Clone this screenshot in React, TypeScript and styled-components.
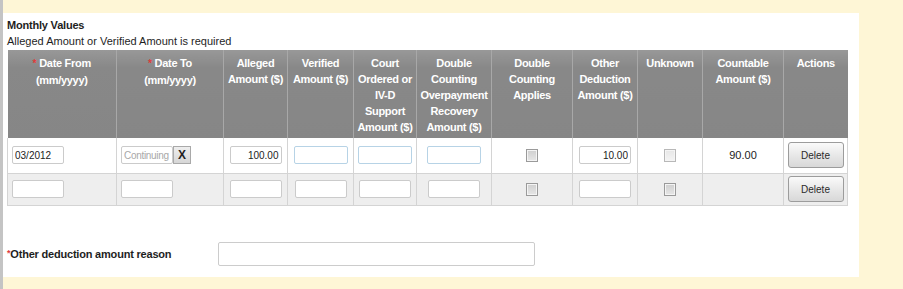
import styled, { createGlobalStyle } from "styled-components";

const GlobalStyle = createGlobalStyle`
    html, body {
        margin: 0;
        padding: 0;
        background: #fef6d6;
        font-family: "Liberation Sans", Arial, sans-serif;
    }
`;

const Page = styled.div`
    min-height: 100vh;
    box-sizing: border-box;
    border-left: 3px solid #c4c4c4;
    padding-top: 13px;
`;

const Panel = styled.section`
    width: 856px;
    height: 264px;
    box-sizing: border-box;
    background: #ffffff;
    padding: 4px 0 0 4px;
`;

const Title = styled.h2`
    margin: 0;
    font-size: 11px;
    line-height: 16px;
    font-weight: bold;
    color: #1e1e1e;
    letter-spacing: -0.2px;
`;

const Hint = styled.p`
    margin: 0 0 1px;
    font-size: 11px;
    line-height: 16px;
    color: #1e1e1e;
`;

const Table = styled.table`
    width: 840px;
    table-layout: fixed;
    border-collapse: collapse;
    border-bottom: 1px solid #d2d2d2;
`;

const HeadCell = styled.th`
    height: 88px;
    box-sizing: border-box;
    padding: 5px 1px 0;
    vertical-align: top;
    text-align: center;
    background: linear-gradient(#989898, #888888 20%, #868686);
    border-left: 1px solid #a8a8a8;
    color: #ffffff;
    font-size: 11px;
    line-height: 16px;
    font-weight: bold;
    letter-spacing: -0.3px;
    white-space: nowrap;
    &:first-child {
        border-left: none;
    }
`;

const Star = styled.span`
    color: #e03a3a;
    font-size: 10px;
    margin-right: 3px;
`;

const Row = styled.tr<{ $shade: boolean }>`
    height: ${(props) => (props.$shade ? "32px" : "35px")};
    background: ${(props) => (props.$shade ? "#eeeeee" : "#ffffff")};
`;

const Cell = styled.td<{ $left?: boolean }>`
    padding: 0 ${(props) => (props.$left ? "4px" : "0")};
    border: 1px solid #d4d4d4;
    border-top: none;
    text-align: ${(props) => (props.$left ? "left" : "center")};
    vertical-align: middle;
    font-size: 11px;
    color: #222222;
`;

const Field = styled.input<{ $blue?: boolean; $right?: boolean }>`
    width: ${(props) => (props.$blue ? "54px" : "52px")};
    height: 18px;
    box-sizing: border-box;
    margin: 0;
    padding: 0 2px;
    border: 1px solid ${(props) => (props.$blue ? "#b7d3e6" : "#cbcbcb")};
    border-radius: 2px;
    background: #ffffff;
    font-family: "Liberation Sans", Arial, sans-serif;
    font-size: 10px;
    color: #222222;
    text-align: ${(props) => (props.$right ? "right" : "left")};
    vertical-align: middle;
    outline: none;
    &::placeholder {
        color: #a8a8a8;
        letter-spacing: -0.3px;
    }
`;

const DateGroup = styled.span`
    display: inline-flex;
    vertical-align: middle;
`;

const ClearButton = styled.button`
    width: 18px;
    height: 18px;
    margin: 0;
    padding: 0;
    border: 1px solid #a9a9a9;
    background: linear-gradient(#eeeeee, #d6d6d6);
    font-family: "Liberation Sans", Arial, sans-serif;
    font-size: 12px;
    font-weight: bold;
    color: #222222;
`;

const Check = styled.span<{ $dark?: boolean }>`
    display: inline-block;
    width: 10px;
    height: 11px;
    vertical-align: middle;
    border: 1px solid ${(props) => (props.$dark ? "#9a9a9a" : "#b8b8b8")};
    background: ${(props) =>
        props.$dark
            ? "linear-gradient(#cfcfcf, #e6e6e6)"
            : "linear-gradient(#e6e6e6, #f4f4f4)"};
    box-shadow: inset 0 0 0 1px #f4f4f4;
`;

const DeleteButton = styled.button`
    width: 56px;
    height: 26px;
    margin: 0;
    padding: 0;
    border: 1px solid #9c9c9c;
    border-radius: 3px;
    background: linear-gradient(#fafafa, #e8e8e8 50%, #d8d8d8);
    font-family: "Liberation Sans", Arial, sans-serif;
    font-size: 10px;
    color: #2a2a2a;
    vertical-align: middle;
`;

const ReasonRow = styled.div`
    display: flex;
    align-items: center;
    margin-top: 36px;
`;

const ReasonLabel = styled.label`
    width: 211px;
    font-size: 11px;
    font-weight: bold;
    color: #1e1e1e;
    letter-spacing: -0.2px;
`;

const ReasonStar = styled.span`
    color: #e03a3a;
    font-size: 9px;
    vertical-align: 2px;
`;

const ReasonInput = styled.input`
    width: 317px;
    height: 24px;
    box-sizing: border-box;
    margin: 0;
    border: 1px solid #cccccc;
    border-radius: 2px;
    background: #ffffff;
    outline: none;
`;

interface IColumn {
    width: number;
    lines: string[];
    required?: boolean;
}

interface IRow {
    dateFrom: string;
    continuing: boolean;
    alleged: string;
    other: string;
    countable: string;
}

const columns: IColumn[] = [
    { width: 109, lines: ["Date From", "(mm/yyyy)"], required: true },
    { width: 107, lines: ["Date To", "(mm/yyyy)"], required: true },
    { width: 64, lines: ["Alleged", "Amount ($)"] },
    { width: 66, lines: ["Verified", "Amount ($)"] },
    { width: 63, lines: ["Court", "Ordered or", "IV-D", "Support", "Amount ($)"] },
    { width: 75, lines: ["Double", "Counting", "Overpayment", "Recovery", "Amount ($)"] },
    { width: 81, lines: ["Double", "Counting", "Applies"] },
    { width: 65, lines: ["Other", "Deduction", "Amount ($)"] },
    { width: 65, lines: ["Unknown"] },
    { width: 81, lines: ["Countable", "Amount ($)"] },
    { width: 64, lines: ["Actions"] },
];

const rows: IRow[] = [
    { dateFrom: "03/2012", continuing: true, alleged: "100.00", other: "10.00", countable: "90.00" },
    { dateFrom: "", continuing: false, alleged: "", other: "", countable: "" },
];

function App() {
    return (
        <Page>
            <GlobalStyle />
            <Panel>
                <Title>Monthly Values</Title>
                <Hint>Alleged Amount or Verified Amount is required</Hint>
                <Table>
                    <colgroup>
                        {columns.map((col, i) => (
                            <col key={i} style={{ width: col.width }} />
                        ))}
                    </colgroup>
                    <thead>
                        <tr>
                            {columns.map((col, i) => (
                                <HeadCell key={i}>
                                    {col.lines.map((line, j) => (
                                        <div key={j}>
                                            {j === 0 && col.required && <Star>*</Star>}
                                            {line}
                                        </div>
                                    ))}
                                </HeadCell>
                            ))}
                        </tr>
                    </thead>
                    <tbody>
                        {rows.map((row, i) => {
                            const first = i === 0;
                            return (
                                <Row key={i} $shade={!first}>
                                    <Cell $left>
                                        <Field readOnly value={row.dateFrom} />
                                    </Cell>
                                    <Cell $left>
                                        {row.continuing ? (
                                            <DateGroup>
                                                <Field readOnly placeholder="Continuing" />
                                                <ClearButton>X</ClearButton>
                                            </DateGroup>
                                        ) : (
                                            <Field readOnly />
                                        )}
                                    </Cell>
                                    <Cell>
                                        <Field readOnly $right value={row.alleged} />
                                    </Cell>
                                    <Cell>
                                        <Field readOnly $blue={first} />
                                    </Cell>
                                    <Cell>
                                        <Field readOnly $blue={first} />
                                    </Cell>
                                    <Cell>
                                        <Field readOnly $blue={first} />
                                    </Cell>
                                    <Cell>
                                        <Check $dark />
                                    </Cell>
                                    <Cell>
                                        <Field readOnly $right value={row.other} />
                                    </Cell>
                                    <Cell>
                                        <Check $dark={!first} />
                                    </Cell>
                                    <Cell>{row.countable}</Cell>
                                    <Cell>
                                        <DeleteButton>Delete</DeleteButton>
                                    </Cell>
                                </Row>
                            );
                        })}
                    </tbody>
                </Table>
                <ReasonRow>
                    <ReasonLabel>
                        <ReasonStar>*</ReasonStar>Other deduction amount reason
                    </ReasonLabel>
                    <ReasonInput readOnly />
                </ReasonRow>
            </Panel>
        </Page>
    );
}

export default App;
